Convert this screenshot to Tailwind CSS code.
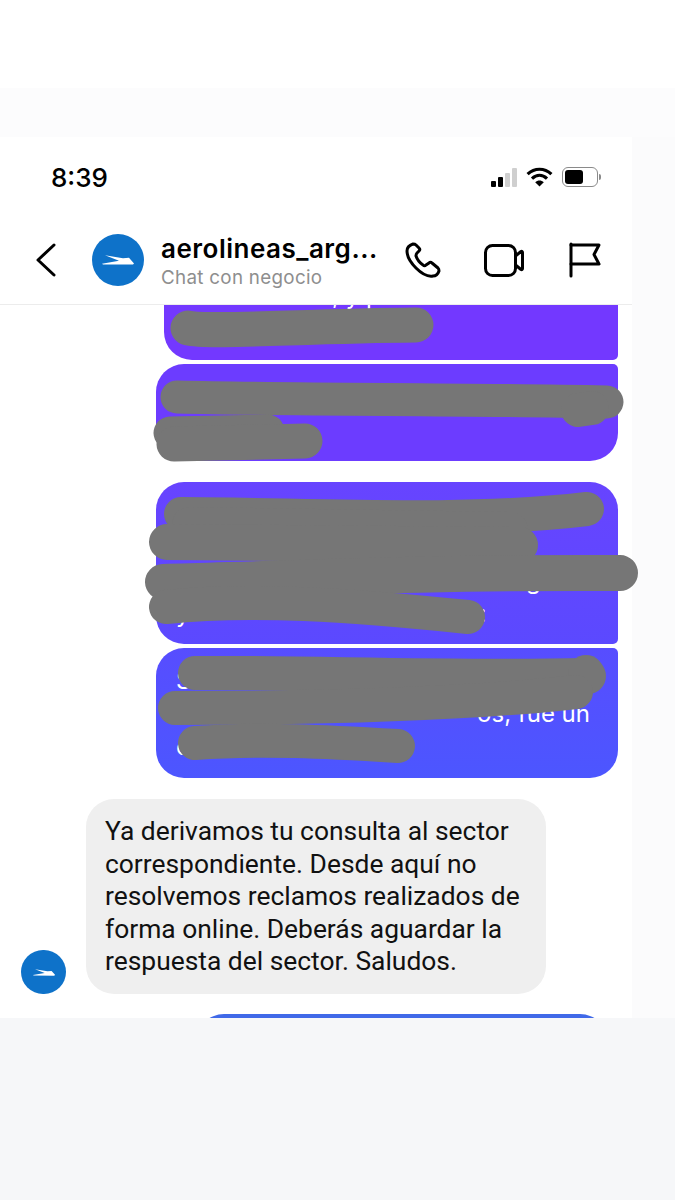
<!DOCTYPE html>
<html lang="es">
<head>
    <meta charset="UTF-8">
    <meta name="viewport" content="width=device-width, initial-scale=1.0">
    <title>Chat con negocio</title>
    <script src="https://cdn.jsdelivr.net/npm/@tailwindcss/browser@4"></script>
</head>
<body class="bg-[#f6f7f9] font-['Inter','Liberation_Sans',sans-serif] overflow-hidden">
<div class="w-[675px] h-[1200px] flex flex-col">

    <!-- page background above the screenshot -->
    <div class="h-[88px] bg-white shrink-0"></div>
    <div class="h-[49px] bg-[#fcfcfd] shrink-0"></div>

    <div class="h-[881px] shrink-0 bg-[#fbfbfc]">
        <div id="shot" class="w-[632px] h-[881px] bg-white flex flex-col overflow-hidden">

            <!-- status bar -->
            <div class="h-[83px] shrink-0 flex items-start justify-between pl-[51px] pr-[31px] pt-[26px]">
                <span class="text-[26px] leading-[30px] font-medium text-black">8:39</span>
                <div class="flex items-center gap-[9px] pt-[4px]">
                    <div class="flex items-end gap-[2px] h-[19px]">
                        <div class="w-[5px] h-[6px] rounded-[1px] bg-black"></div>
                        <div class="w-[5px] h-[10px] rounded-[1px] bg-black"></div>
                        <div class="w-[5px] h-[14px] rounded-[1px] bg-[#cfcfcf]"></div>
                        <div class="w-[5px] h-[19px] rounded-[1px] bg-[#cfcfcf]"></div>
                    </div>
                    <svg width="27" height="20" viewBox="0 0 27 20" fill="none" stroke="black" stroke-width="3.2">
                        <path d="M1.6 7.2C8.6 .6 18.4 .6 25.4 7.2"/>
                        <path d="M6 11.6C10.6 7.4 16.4 7.4 21 11.6"/>
                        <path d="M13.5 19.6L9.2 15.2C11.8 13 15.2 13 17.8 15.2Z" fill="black" stroke="none"/>
                    </svg>
                    <div class="flex items-center gap-[1px]">
                        <div class="w-[36px] h-[20px] rounded-[6px] border border-[#8a8a8a] p-[2px] pr-[14px]">
                            <div class="w-full h-full rounded-[3px] bg-black"></div>
                        </div>
                        <div class="w-[2px] h-[6px] rounded-r-full bg-[#8a8a8a]"></div>
                    </div>
                </div>
            </div>

            <!-- header -->
            <header class="h-[85px] shrink-0 border-b border-[#ececec] flex items-center pl-[36px] pr-[31px] pb-[4px]">
                <svg width="20" height="34" viewBox="0 0 20 34" fill="none" stroke="black" stroke-width="3" stroke-linecap="round" stroke-linejoin="round" class="shrink-0">
                    <path d="M18 2L2 17L18 32"/>
                </svg>
                <div class="ml-[36px] shrink-0 w-[52px] h-[52px] rounded-full bg-[#0e72c9] flex items-center justify-center">
                    <svg width="32" height="10" viewBox="0 0 32 10" fill="white"><path d="M0 8.8L17 5.8L3 0.2L21 3.3L27 2.8L32 8.4L31 9.6L1 9.4Z"/></svg>
                </div>
                <div class="ml-[17px] w-[232px] shrink-0 pt-[2px]">
                    <div class="text-[26px] leading-[31px] font-semibold text-black whitespace-nowrap tracking-[0.5px]">aerolineas_arg...</div>
                    <div class="mt-[2px] text-[18.8px] leading-[23px] text-[#8e8e8e] tracking-[0.3px]">Chat con negocio</div>
                </div>
                <div class="ml-auto flex items-center">
                    <svg width="36" height="36" viewBox="0 0 36 36" fill="none" stroke="black" stroke-width="3" stroke-linejoin="round">
                        <path d="M8 2C5 3 2 5 2 9C2 14 6 21 11 26C16 31 23 35 28 34C31 34 33 32 34 29C34 28 34 27 33 26L27 21C26 20 25 20 24 21L21 23C20 24 19 24 18 23C15 21 12 17 11 14C11 13 11 12 12 11L14 9C15 8 15 7 14 6L11 3C10 2 9 2 8 2Z"/>
                    </svg>
                    <svg width="40" height="33" viewBox="0 0 40 33" fill="none" stroke="black" stroke-width="3" stroke-linejoin="round" class="ml-[43px]">
                        <rect x="1.5" y="1.5" width="30" height="30" rx="7"/>
                        <path d="M31.5 12L37 7.5C37.8 7 38.5 7.5 38.5 8.5V24.5C38.5 25.5 37.8 26 37 25.5L31.5 21"/>
                    </svg>
                    <svg width="32" height="36" viewBox="0 0 32 36" fill="none" stroke="black" stroke-width="3" stroke-linecap="round" stroke-linejoin="round" class="ml-[45px]">
                        <path d="M2 2V34"/>
                        <path d="M2 3H30L25 12.5L30 22H2"/>
                    </svg>
                </div>
            </header>

            <!-- messages -->
            <main class="flex-1 flex flex-col items-end pr-[14px] overflow-hidden">
                <div class="w-[454px] h-[55px] shrink-0 bg-[#7338ff] rounded-bl-[28px] rounded-br-[5px] overflow-hidden text-[24px] leading-[33px] text-white">
                    <div class="-mt-[26px] pl-[168px]">, y p</div>
                </div>
                <div class="w-[462px] h-[97px] shrink-0 mt-[4px] bg-[#6c3cff] rounded-[28px] rounded-tr-[5px]"></div>
                <div class="w-[462px] h-[162px] shrink-0 mt-[21px] bg-gradient-to-b from-[#6744ff] to-[#5b49ff] rounded-[28px] rounded-br-[5px] pl-[20px] pt-[16px] text-[24px] leading-[33px] text-white">
                    <div class="h-[66px]"></div>
                    <div class="pl-[350px]">g</div>
                    <div class="flex">y<span class="ml-[290px]">:</span></div>
                </div>
                <div class="w-[462px] h-[130px] shrink-0 mt-[4px] bg-gradient-to-b from-[#574dff] to-[#4c56ff] rounded-[28px] rounded-tr-[5px] px-[20px] pt-[16px] text-[24px] leading-[33px] text-white">
                    <div>S</div>
                    <div class="text-right pr-[8px]">os, fue un</div>
                    <div>e</div>
                </div>

                <div class="w-full shrink-0 mt-[21px] pl-[21px] flex items-end">
                    <div class="w-[45px] h-[44px] shrink-0 rounded-full bg-[#0e72c9] flex items-center justify-center">
                        <svg width="22" height="7" viewBox="0 0 32 10" fill="white"><path d="M0 8.8L17 5.8L3 0.2L21 3.3L27 2.8L32 8.4L31 9.6L1 9.4Z"/></svg>
                    </div>
                    <div class="ml-[20px] w-[460px] h-[195px] rounded-[28px] bg-[#efefef] pl-[19px] pt-[16px] text-[26.4px] leading-[32.5px] text-[#111] font-['Roboto','Inter',sans-serif]">
                        Ya derivamos tu consulta al sector<br>correspondiente. Desde aquí no<br>resolvemos reclamos realizados de<br>forma online. Deberás aguardar la<br>respuesta del sector. Saludos.
                    </div>
                </div>

                <div class="w-[412px] h-[30px] shrink-0 mt-[20px] mr-[10px] rounded-t-[28px] bg-[#4069e8]"></div>
            </main>
        </div>
    </div>

    <div class="flex-1"></div>
</div>

<!-- hand drawn redaction: runs past the screenshot's right edge, so it sits on the page -->
<svg class="absolute left-0 top-0 pointer-events-none" width="675" height="1200" viewBox="0 0 675 1200" fill="none" stroke="#767676" stroke-linecap="round" stroke-linejoin="round">
    <path stroke-width="35" d="M188 328C210 333 300 326 416 325"/>

    <path stroke-width="33" d="M177 397C300 400 450 399 607 402"/>
    <path stroke-width="34" d="M578 410L592 408"/>
    <path stroke-width="33" d="M170 433L268 431"/>
    <path stroke-width="35" d="M174 444L305 441"/>

    <path stroke-width="34" d="M181 514C300 514 460 524 587 509"/>
    <path stroke-width="36" d="M190 525L510 530"/>
    <path stroke-width="36" d="M167 542L520 545"/>
    <path stroke-width="36" d="M163 582C300 578 460 572 620 573"/>
    <path stroke-width="34" d="M166 607C250 598 350 605 468 617"/>

    <path stroke-width="34" d="M195 673C300 672 450 678 585 675"/>
    <path stroke-width="36" d="M586 673L588 676"/>
    <path stroke-width="34" d="M175 708C300 708 450 706 576 692"/>
    <path stroke-width="34" d="M195 743C260 738 330 742 398 746"/>
</svg>
</body>
</html>
